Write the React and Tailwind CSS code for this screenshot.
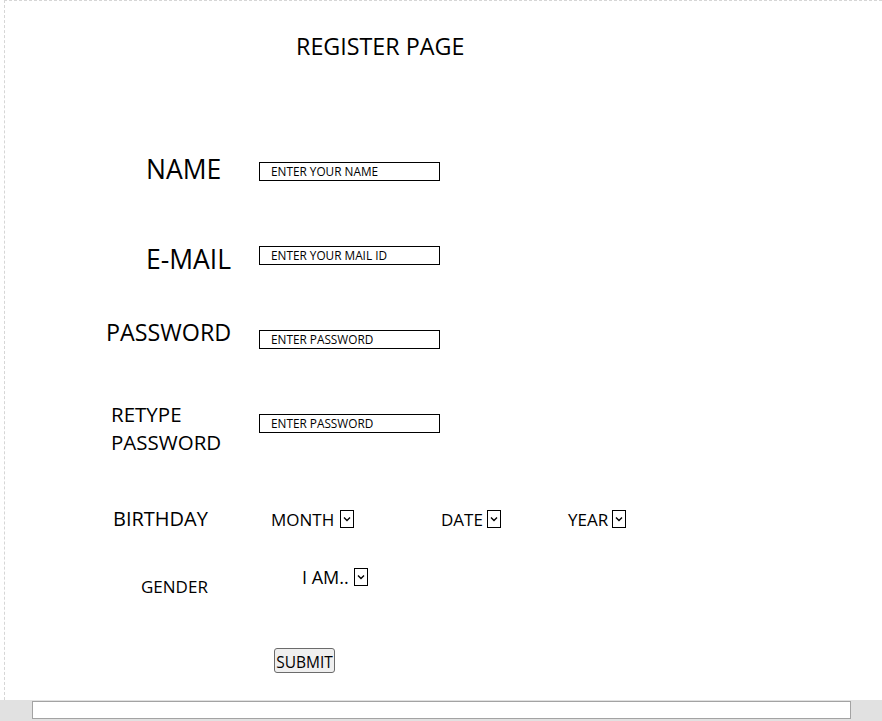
import React from "react";

const font = { fontFamily: '"Open Sans", "Noto Sans", sans-serif' };

function Field({ text }) {
  return (
    <div className="w-[181px] h-[19px] border border-black pl-[11px] text-[11.8px] leading-[17px] text-black whitespace-nowrap">
      {text}
    </div>
  );
}

function SelectBox() {
  return (
    <div className="w-[14px] h-[18px] border border-black flex items-center justify-center bg-white">
      <svg width="8" height="6" viewBox="0 0 8 6">
        <path d="M1 1.5 L4 4.5 L7 1.5" fill="none" stroke="black" strokeWidth="1.4" />
      </svg>
    </div>
  );
}

export default function App() {
  return (
    <div className="w-[882px] h-[721px] flex flex-col bg-white text-black overflow-hidden" style={font}>
      <div className="flex-1 ml-[4px] border-l border-t border-dashed border-[#d6d6d6] flex flex-col">
        <h1 className="mt-[34px] ml-[291px] text-[23.3px] leading-none font-normal whitespace-nowrap">
          REGISTER PAGE
        </h1>

        <div className="flex items-start mt-[98px]">
          <div className="w-[254px] pl-[141px] text-[26.5px] leading-none">NAME</div>
          <div className="mt-[6px]">
            <Field text="ENTER YOUR NAME" />
          </div>
        </div>

        <div className="flex items-start mt-[63px]">
          <div className="w-[254px] pl-[141px] text-[26.5px] leading-none">E-MAIL</div>
          <div>
            <Field text="ENTER YOUR MAIL ID" />
          </div>
        </div>

        <div className="flex items-start mt-[49px]">
          <div className="w-[254px] pl-[101px] text-[23.3px] leading-none">PASSWORD</div>
          <div className="mt-[9px]">
            <Field text="ENTER PASSWORD" />
          </div>
        </div>

        <div className="flex items-start mt-[51px]">
          <div className="w-[254px] pl-[106px] text-[20.5px] leading-[28px]">
            RETYPE
            <br />
            PASSWORD
          </div>
          <div className="mt-[14px]">
            <Field text="ENTER PASSWORD" />
          </div>
        </div>

        <div className="flex items-center mt-[53px] h-[20px]">
          <div className="w-[266px] pl-[108px] text-[20px] leading-none">BIRTHDAY</div>
          <div className="w-[170px] flex items-center gap-[6px]">
            <span className="text-[17px] leading-none">MONTH</span>
            <SelectBox />
          </div>
          <div className="w-[127px] flex items-center gap-[4px]">
            <span className="text-[17px] leading-none">DATE</span>
            <SelectBox />
          </div>
          <div className="flex items-center gap-[4px]">
            <span className="text-[17px] leading-none">YEAR</span>
            <SelectBox />
          </div>
        </div>

        <div className="flex items-start mt-[39px]">
          <div className="w-[297px] pl-[136px] mt-[10px] text-[17px] leading-none">GENDER</div>
          <div className="flex items-center gap-[5px]">
            <span className="text-[18px] leading-none">I AM..</span>
            <SelectBox />
          </div>
        </div>

        <div className="mt-[53px] ml-[269px]">
          <button className="w-[61px] h-[25px] border border-[#6b6b6b] rounded-[3px] bg-[#efefef] text-[15.5px] leading-none text-black flex items-start justify-center p-0 pt-[6px]">
            SUBMIT
          </button>
        </div>
      </div>

      <div className="h-[21px] bg-[#e1e1e1] pt-[1px]">
        <div className="ml-[32px] w-[819px] h-[18px] border border-[#a3a3a3] bg-white" />
      </div>
    </div>
  );
}
